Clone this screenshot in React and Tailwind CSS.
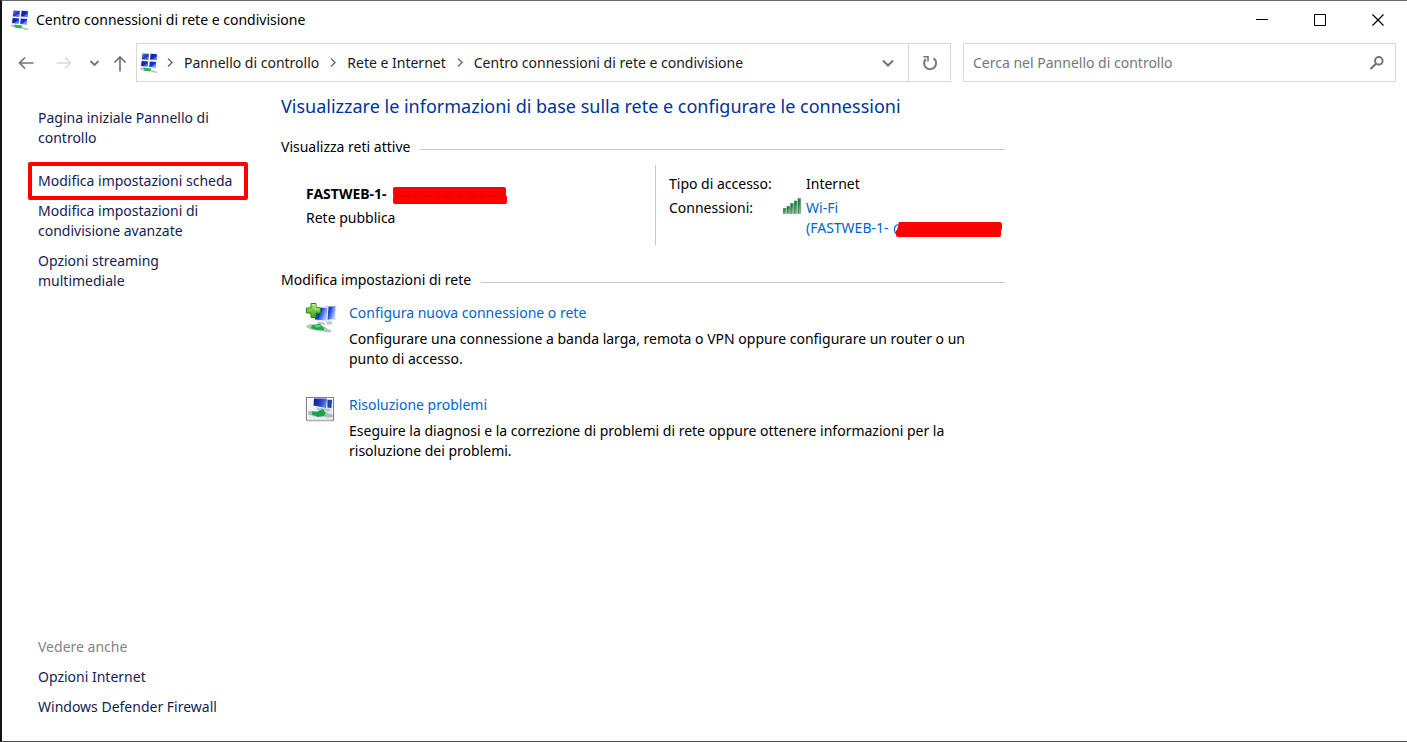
import React from "react";

function MonitorsIcon({ className }) {
  return (
    <svg viewBox="0 0 20 20" className={className} aria-hidden="true">
      <defs>
        <linearGradient id="screen" x1="0" y1="0" x2="1" y2="1">
          <stop offset="0" stopColor="#5f83ee" />
          <stop offset="0.35" stopColor="#0c22ac" />
          <stop offset="0.75" stopColor="#1433cc" />
          <stop offset="1" stopColor="#7fa0f8" />
        </linearGradient>
      </defs>
      <path d="M3 0l7.500 .3-.6 7-7.900-.4zM11 .3l7.500 .3-.5 7-7.600-.3zM2 7.500l7.800 .5-.6 6.500-8-.7zM10.300 8l7.500 .5-.6 7-7.700-.8z" fill="#dfe4ee" />
      <path d="M3.600 .5l6.200 .4-.6 5.800-6.400-.4zM11.700 .8l6.200 .4-.5 5.800-6.400-.4zM2.700 7.900l6.300 .5-.6 5.200-6.300-.6zM10.900 8.400l6.200 .5-.6 5.600-6.300-.7z" fill="url(#screen)" />
      <path d="M4.500 6.400L9 3.500v3.200zM12.600 6.700L17.300 3.800v3.200zM3.800 13.200L8.200 10.500v3zM11.800 14L16.400 11.200v3.300z" fill="#8fa9f5" opacity="0.6" />
      <path d="M.5 15.200l3-.4 1.500-.3 7 2.500 3.500 1 3 .8-.6 1.200-3.400-.6-3.500-1.500-5 .2-5-1.800z" fill="#b4bebb" />
      <path d="M4.500 14.700l8 .9-1.500 3-5.500-1.100z" fill="#21b64b" />
    </svg>
  );
}

function AddConnectionIcon() {
  return (
    <svg viewBox="0 0 32 32" className="block h-8 w-8" aria-hidden="true">
      <defs>
        <linearGradient id="add-screen" x1="0" y1="0" x2="1" y2="0.4">
          <stop offset="0" stopColor="#0a18a0" />
          <stop offset="0.5" stopColor="#1c3fd0" />
          <stop offset="1" stopColor="#a9c8ff" />
        </linearGradient>
        <linearGradient id="plus" x1="0" y1="0" x2="0" y2="1">
          <stop offset="0" stopColor="#b4ec6a" />
          <stop offset="1" stopColor="#36a51c" />
        </linearGradient>
      </defs>
      <path d="M18 3l13.500-.5-1 14.500-10 1z" fill="#dde5f0" />
      <path d="M20 4l10.500-.7-1 12.500-7.500 1z" fill="url(#add-screen)" />
      <path d="M9 3.500l14.500 .5-1 14.500-13.500-1z" fill="#e7ebf2" />
      <path d="M10 4.500l12.500 .5-1 12.500-11.500-1z" fill="url(#add-screen)" />
      <path d="M13 18.500l6 .8 2 3-9-1.500zM21 18.500l5-.5 2 3-6 1z" fill="#c3cbcf" />
      <path d="M1 22.500l5-1.500 5 1.500 9 1 3 2.500 3.500 1.500-.5 2-6-.5-4-1.500-7 0-6.500-2.500z" fill="#b9c4c2" />
      <path d="M7 22l8-1.300 4.500 5-1.500 1.800-6-.5-6-1.700z" fill="#1fac4d" />
      <path d="M9 22.800l6-.8 1 1.500-4 .9z" fill="#68dc86" />
      <path d="M6 .5h5v4.500h4.500v5H11v4.500H6V10H1.500V5H6z" fill="url(#plus)" stroke="#1f8d13" />
      <path d="M7 1.500h3v4.500h4.500" fill="none" stroke="#c9f596" />
    </svg>
  );
}

function TroubleshootIcon() {
  return (
    <svg viewBox="0 0 32 32" className="block h-8 w-8" aria-hidden="true">
      <defs>
        <linearGradient id="fix-screen" x1="0" y1="0" x2="1" y2="0.3">
          <stop offset="0" stopColor="#08158c" />
          <stop offset="0.6" stopColor="#2343bd" />
          <stop offset="1" stopColor="#5f83e6" />
        </linearGradient>
        <linearGradient id="fix-back" x1="0" y1="0" x2="1" y2="1">
          <stop offset="0" stopColor="#ffffff" />
          <stop offset="1" stopColor="#d5dae0" />
        </linearGradient>
      </defs>
      <path d="M2 26h27" stroke="#c9ccd0" />
      <path d="M1.500 2.500h27v22.500h-27z" fill="url(#fix-back)" stroke="#80868e" strokeWidth="1.200" />
      <path d="M2.500 3.500h25v20.500h-25z" fill="none" stroke="#ffffff" />
      <path d="M21 4h6.500v9l-5 .5z" fill="#c5d0e6" />
      <path d="M9 3.500h13l-1 9.500-12.500-2.500z" fill="url(#fix-screen)" />
      <path d="M22.500 5h4.500l-.8 8-3.700-.5z" fill="#2440ac" />
      <path d="M12 12.500l9 1 5 1.500-3 1.500-11-1.500z" fill="#bac3cd" />
      <path d="M3 16.500l4-.5 4 .5 9 0 4 2.500 4 .5v2.500l-6 .5-4-1.300-8 .2-7-2z" fill="#aebbb8" />
      <path d="M7 16.500l5 .3 6-2.800 2.500 4-1.500 3-6 1-6-2.500z" fill="#14a548" />
    </svg>
  );
}

function SignalIcon() {
  return (
    <svg viewBox="0 0 18 16" className="block h-4 w-[18px]" aria-hidden="true">
      <defs>
        <linearGradient id="bars" x1="0" y1="0" x2="1" y2="0.9">
          <stop offset="0" stopColor="#1c6d3b" />
          <stop offset="0.4" stopColor="#327f4d" />
          <stop offset="1" stopColor="#b8e8c2" />
        </linearGradient>
      </defs>
      <g fill="url(#bars)" stroke="#2a7a46" strokeWidth="0.5">
        <rect x="0.3" y="10.500" width="2.700" height="5" />
        <rect x="4" y="8.300" width="2.700" height="7.200" />
        <rect x="7.600" y="5.600" width="2.800" height="9.900" />
        <rect x="11.300" y="3" width="2.700" height="12.500" />
        <rect x="15" y="0.700" width="2.700" height="14.800" />
      </g>
    </svg>
  );
}

function Stroke({ d, className, width = 2, viewBox = "0 0 16 16" }) {
  return (
    <svg viewBox={viewBox} className={className} fill="none" stroke="currentColor" strokeWidth={width} aria-hidden="true">
      <path d={d} />
    </svg>
  );
}

function Crumb({ children }) {
  return (
    <>
      <Stroke d="M6 3.500L10 7.500 6 11.500" className="h-4 w-4 shrink-0 text-[#707070]" width={1.5} />
      <li className="whitespace-nowrap">
        <a href="#" className="block leading-5 text-[#1a1a1a]">{children}</a>
      </li>
    </>
  );
}

function SectionTitle({ children }) {
  return (
    <div className="flex items-center gap-2.5">
      <h2 className="leading-5">{children}</h2>
      <div className="mt-1 h-px flex-1 bg-[#c8c8c8]" />
    </div>
  );
}

function Task({ icon, title, children }) {
  return (
    <div className="flex gap-3 pr-7 pl-6">
      <div className="shrink-0">{icon}</div>
      <div>
        <a href="#" className="block leading-5 text-[#0066cc]">{title}</a>
        <p className="mt-1.5 leading-5">{children}</p>
      </div>
    </div>
  );
}

export default function App() {
  return (
    <div className="flex min-h-screen flex-col border-y border-l-2 border-t-[#6b676b] border-b-[#4a4744] border-l-[#121316] bg-white font-['Noto_Sans','Open_Sans',sans-serif] text-sm text-black">
      <header className="flex h-[37px] items-center pl-2">
        <MonitorsIcon className="h-5 w-5" />
        <h1 className="ml-1.5 flex-1 leading-5">Centro connessioni di rete e condivisione</h1>
        <button aria-label="Riduci a icona" className="grid h-full w-[58px] place-items-center">
          <Stroke d="M0 5.500H12" viewBox="0 0 12 12" width={1} className="h-3 w-3" />
        </button>
        <button aria-label="Ingrandisci" className="grid h-full w-[58px] place-items-center">
          <Stroke d="M.5 .5h11v11H.5z" viewBox="0 0 12 12" width={1} className="h-3 w-3" />
        </button>
        <button aria-label="Chiudi" className="grid h-full w-[58px] place-items-center">
          <Stroke d="M.5 .5l11 11M11.500 .5l-11 11" viewBox="0 0 12 12" width={1.2} className="h-3 w-3" />
        </button>
      </header>

      <div className="mt-[5px] flex h-[39px] items-center pr-[11px] pl-4">
        <button aria-label="Indietro" className="text-[#757575]">
          <Stroke d="M15.500 8H1.500M7 2.500L1.500 8 7 13.500" className="block h-4 w-4" width={1.7} />
        </button>
        <button aria-label="Avanti" className="ml-[22px] text-[#d9d9d9]">
          <Stroke d="M.5 8H14.500M9 2.500L14.500 8 9 13.500" className="block h-4 w-4" width={1.5} />
        </button>
        <button aria-label="Percorsi recenti" className="ml-3.5 text-[#757575]">
          <Stroke d="M4.500 6L8.500 10 12.500 6" className="block h-4 w-4" width={1.8} />
        </button>
        <button aria-label="Livello superiore" className="ml-2.5 text-[#757575]">
          <Stroke d="M8 16.500V2M2.500 7.500L8 2 13.500 7.500" className="block h-4 w-4 overflow-visible" width={1.7} />
        </button>
        <div className="ml-2 flex h-full min-w-0 flex-1 border border-[#d9d9d9]">
          <nav aria-label="Percorso" className="flex min-w-0 flex-1 items-center">
            <MonitorsIcon className="ml-0.5 h-5 w-5 shrink-0" />
            <ol className="ml-[3px] flex items-center gap-1.5">
              <Crumb>Pannello di controllo</Crumb>
              <Crumb>Rete e Internet</Crumb>
              <Crumb>Centro connessioni di rete e condivisione</Crumb>
            </ol>
          </nav>
          <button aria-label="Percorsi precedenti" className="grid w-10 place-items-center text-[#757575]">
            <Stroke d="M3 5.500L8 10.500 13 5.500" className="h-4 w-4" width={2} />
          </button>
          <button aria-label="Aggiorna" className="grid w-[42px] place-items-center border-l border-[#d9d9d9] text-[#757575]">
            <svg viewBox="0 0 16 16" className="h-4 w-4" fill="none" stroke="currentColor" strokeWidth="1.900" aria-hidden="true">
              <path d="M3.800 4A6 6 0 1 0 11.500 3.200" />
              <path d="M1.500 1.800H6V6.500" strokeWidth="1.600" />
            </svg>
          </button>
        </div>
        <label className="ml-3 flex h-full w-[433px] items-center border border-[#d9d9d9] pr-2.5 pl-[9px]">
          <input type="search" aria-label="Cerca nel Pannello di controllo" placeholder="Cerca nel Pannello di controllo" className="min-w-0 flex-1 leading-5 outline-none placeholder:text-[#767676]" />
          <svg viewBox="0 0 16 16" className="h-4 w-4 text-[#757575]" fill="none" stroke="currentColor" aria-hidden="true">
            <circle cx="9.800" cy="5.800" r="3.800" strokeWidth="2" />
            <path d="M7 8.800L1.500 14" strokeWidth="2.200" />
          </svg>
        </label>
      </div>

      <div className="flex flex-1">
        <aside className="flex w-[243px] shrink-0 flex-col pt-[26px] pb-6 pl-9 leading-5 text-[#151c55]">
          <nav aria-label="Attività" className="flex flex-col items-start gap-2.5">
            <a href="#" className="mb-[13px] w-44">Pagina iniziale Pannello di controllo</a>
            <a href="#" className="-mx-2.5 -my-[9px] rounded-xs border-4 border-[#ff0000] py-[5px] pr-3 pl-1.5 whitespace-nowrap">Modifica impostazioni scheda</a>
            <a href="#" className="w-44">Modifica impostazioni di condivisione avanzate</a>
            <a href="#" className="w-36">Opzioni streaming multimediale</a>
          </nav>
          <nav aria-labelledby="see-also" className="mt-auto flex flex-col gap-2.5">
            <h2 id="see-also" className="text-[#838383]">Vedere anche</h2>
            <a href="#">Opzioni Internet</a>
            <a href="#">Windows Defender Firewall</a>
          </nav>
        </aside>

        <main className="ml-9 max-w-[724px] flex-1 pt-2.5">
          <h1 className="text-lg leading-7 text-[#003399]">Visualizzare le informazioni di base sulla rete e configurare le connessioni</h1>
          <section className="mt-[17px]">
            <SectionTitle>Visualizza reti attive</SectionTitle>
            <div className="mt-2 flex h-20">
              <div className="flex-1 pt-[19px] pl-[25px]">
                <p className="flex items-center gap-1.5 leading-5 font-bold">
                  FASTWEB-1-
                  <svg viewBox="0 0 115 17" className="mt-0.5 h-[17px] w-[115px]" fill="#ff0000" aria-hidden="true">
                    <rect x="0" y="0" width="113" height="9" rx="2" />
                    <rect x="0" y="8" width="114" height="9" rx="2" />
                    <path d="M8 8.500H104" stroke="#c40000" strokeWidth="0.600" strokeDasharray="9 4 3 6" />
                  </svg>
                </p>
                <p className="mt-1 leading-5">Rete pubblica</p>
              </div>
              <dl className="grid w-[350px] grid-cols-[112px_25px_1fr] content-start gap-y-1 border-l border-[#c8c8c8] pt-[9px] pl-[13px] leading-5">
                <dt className="col-span-2">Tipo di accesso:</dt>
                <dd>Internet</dd>
                <dt>Connessioni:</dt>
                <dd className="col-span-2 flex gap-1.5">
                  <span className="pl-0.5"><SignalIcon /></span>
                  <a href="#" className="-ml-px text-[#0066cc]">
                    Wi-Fi
                    <span className="flex items-center gap-1 whitespace-nowrap">
                      (FASTWEB-1-
                      <svg viewBox="-2 0 109 17" className="mt-0.5 h-[17px] w-[109px]" aria-hidden="true">
                        <path d="M3 3.500Q-1 5 -.5 9Q-.5 12 2 13.500" fill="none" stroke="#0066cc" strokeWidth="1.200" />
                        <path d="M4 1H105Q107 1 107 4V8Q106 9 106 10V14Q106 16 104 16H3Q1 16 1 14V10Q3 8 3 5Z" fill="#ff0000" />
                      </svg>
                    </span>
                  </a>
                </dd>
              </dl>
            </div>
          </section>
          <section className="mt-[25px]">
            <SectionTitle>Modifica impostazioni di rete</SectionTitle>
            <div className="mt-[13px] flex flex-col gap-[26px]">
              <Task icon={<AddConnectionIcon />} title="Configura nuova connessione o rete">
                Configurare una connessione a banda larga, remota o VPN oppure configurare un router o un punto di accesso.
              </Task>
              <Task icon={<TroubleshootIcon />} title="Risoluzione problemi">
                Eseguire la diagnosi e la correzione di problemi di rete oppure ottenere informazioni per la risoluzione dei problemi.
              </Task>
            </div>
          </section>
        </main>
      </div>
    </div>
  );
}
